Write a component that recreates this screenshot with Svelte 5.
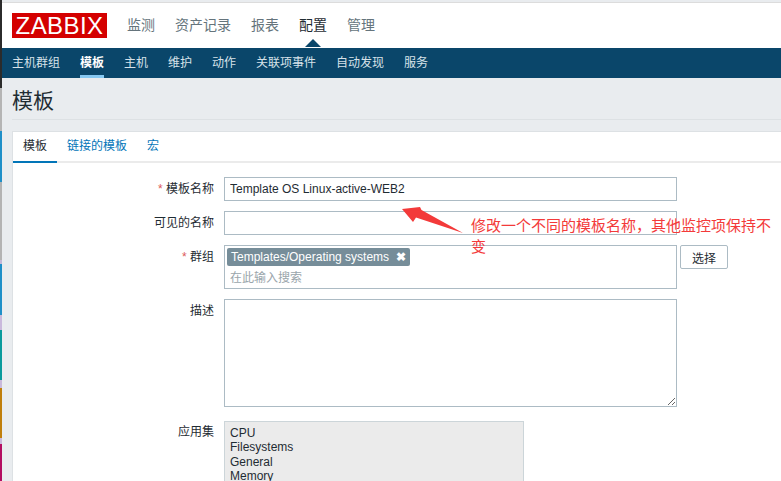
<script>
	const mainMenu = ['监测', '资产记录', '报表', '配置', '管理'];
	const subMenu = ['主机群组', '模板', '主机', '维护', '动作', '关联项事件', '自动发现', '服务'];
	const tabs = ['模板', '链接的模板', '宏'];
	const apps = ['CPU', 'Filesystems', 'General', 'Memory'];
	// the sliver of the window behind, left edge
	const strip = [
		['#2b2b2b', 88], ['#b5b5b5', 43], ['#1f8fc8', 51], ['#b3b3b3', 78], ['#c5b8d8', 4], ['#1f8fc8', 51],
		['#c9b9dc', 15], ['#0a9a9c', 50], ['#c9b9dc', 8], ['#c07f0c', 50], ['#c9b9dc', 6], ['#b30e62', 37]
	];
</script>

<div class="page">
	<div class="strip">
		{#each strip as [color, h]}
			<i style="background:{color};height:{h}px"></i>
		{/each}
	</div>
	<div class="main">
		<header class="top">
			<div class="logo">ZABBIX</div>
			<nav class="menu">
				{#each mainMenu as item}
					<a class:on={item === '配置'}>{item}</a>
				{/each}
			</nav>
		</header>
		<nav class="sub">
			{#each subMenu as item}
				<a class:on={item === '模板'}>{item}</a>
			{/each}
		</nav>
		<div class="content">
			<h1>模板</h1>
			<section class="panel">
				<div class="tabs">
					{#each tabs as t, i}
						<a class:on={i === 0}>{t}</a>
					{/each}
				</div>
				<form class="form">
					<label class="req">模板名称</label>
					<input value="Template OS Linux-active-WEB2" />
					<label>可见的名称</label>
					<input />
					<label class="req">群组</label>
					<div class="groupRow">
						<div class="multi">
							<span class="chip">Templates/Operating systems<b>✖</b></span>
							<span class="ph">在此输入搜索</span>
						</div>
						<button type="button">选择</button>
					</div>
					<label>描述</label>
					<textarea></textarea>
					<label class="apps">应用集</label>
					<div class="list">
						{#each apps as a}
							<div>{a}</div>
						{/each}
					</div>
				</form>
			</section>
		</div>
	</div>

	<svg class="arrow" width="70" height="32" viewBox="0 0 70 32">
		<polygon points="2,8 20,6 21.5,9 63,32 16,16.5 13,21" fill="#f33a3a" />
	</svg>
	<p class="note">修改一个不同的模板名称，其他监控项保持不变</p>
</div>

<style>
	:global(body) {
		margin: 0;
		background: #e9ecef;
		overflow: hidden;
	}
	.page {
		display: flex;
		width: 781px;
		height: 481px;
		overflow: hidden;
		position: relative;
		font-family: 'Liberation Sans', 'Noto Sans CJK SC', sans-serif;
		font-size: 12px;
		color: #1f2c33;
	}
	.strip {
		flex: 0 0 2px;
		display: flex;
		flex-direction: column;
	}
	.strip i {
		display: block;
		flex: none;
	}
	.main {
		flex: 1;
		min-width: 0;
	}
	.top {
		margin-top: 2px;
		border-top: 1px solid #dcdcdc;
		height: 45px;
		background: #fff;
		display: flex;
		align-items: center;
		padding-left: 10px;
	}
	.logo {
		width: 95px;
		height: 25px;
		margin-bottom: 1px;
		background: #d40000;
		color: #fff;
		font-size: 24px;
		line-height: 25px;
		letter-spacing: 0.4px;
		text-align: center;
	}
	.menu {
		display: flex;
		gap: 20px;
		margin-left: 20px;
		margin-bottom: 3px;
		font-size: 14px;
		color: #65747c;
	}
	.menu a {
		position: relative;
	}
	.menu a.on {
		color: #1f2c33;
	}
	.menu a.on::after {
		content: '';
		position: absolute;
		left: 50%;
		bottom: -13px;
		margin-left: -8px;
		border: 8px solid transparent;
		border-top: 0;
		border-bottom: 8px solid #0a466a;
	}
	.sub {
		height: 30px;
		background: #0a466a;
		display: flex;
		gap: 20px;
		padding-left: 10px;
		color: #d7e2e9;
		line-height: 30px;
	}
	.sub a {
		height: 30px;
		box-sizing: border-box;
	}
	.sub a.on {
		color: #fff;
		font-weight: bold;
		border-bottom: 3px solid #86c8f2;
	}
	.content {
		padding-left: 10px;
	}
	h1 {
		margin: 0;
		height: 41px;
		line-height: 45px;
		font-size: 21px;
		font-weight: normal;
		border-bottom: 1px solid #dde1e4;
	}
	.panel {
		margin-top: 11px;
		background: #fff;
		border-top: 1px solid #dde1e4;
		border-left: 1px solid #dde1e4;
		height: 400px;
	}
	.tabs {
		display: flex;
		height: 29px;
		border-bottom: 2px solid #ebebeb;
		line-height: 28px;
		color: #0275b8;
	}
	.tabs a {
		padding: 0 10px;
		height: 29px;
	}
	.tabs a.on {
		color: #1f2c33;
		border-bottom: 2px solid #0275b8;
	}
	.form {
		display: grid;
		grid-template-columns: 201px 453px;
		column-gap: 10px;
		row-gap: 10px;
		padding-top: 14px;
		align-items: start;
	}
	label {
		text-align: right;
		line-height: 24px;
	}
	.req::before {
		content: '* ';
		color: #dc5a5a;
	}
	.apps {
		margin-top: -1px;
	}
	input,
	textarea,
	.multi {
		box-sizing: border-box;
		width: 453px;
		border: 1px solid #acbbc4;
		background: #fff;
		margin: 0;
		font: inherit;
		color: inherit;
		outline: none;
	}
	input {
		height: 24px;
		padding: 0 5px;
	}
	textarea {
		display: block;
		height: 108px;
		margin-bottom: 4px;
	}
	.groupRow {
		position: relative;
		width: 453px;
	}
	.multi {
		height: 44px;
		padding: 2px 2px;
		display: flex;
		flex-direction: column;
		align-items: flex-start;
	}
	.chip {
		background: #768d99;
		color: #fff;
		height: 18px;
		line-height: 18px;
		padding: 0 4px;
		border-radius: 2px;
		white-space: pre;
	}
	.chip b {
		font-size: 12px;
		margin-left: 7px;
	}
	.ph {
		color: #9aa5ab;
		margin: 3px 0 0 3px;
		line-height: 18px;
	}
	button {
		position: absolute;
		left: 456px;
		top: 0;
		width: 48px;
		height: 24px;
		background: #fff;
		border: 1px solid #acbbc4;
		border-radius: 2px;
		font: inherit;
		color: inherit;
		padding: 0;
	}
	.list {
		box-sizing: border-box;
		width: 300px;
		height: 100px;
		border: 1px solid #ccd5d9;
		background: #ebebeb;
		padding: 4px 5px;
		line-height: 14.4px;
	}
	.arrow {
		position: absolute;
		left: 400px;
		top: 201px;
	}
	.note {
		position: absolute;
		left: 471px;
		top: 215px;
		width: 302px;
		margin: 0;
		font-size: 15px;
		line-height: 21px;
		color: #f33a3a;
	}
</style>
